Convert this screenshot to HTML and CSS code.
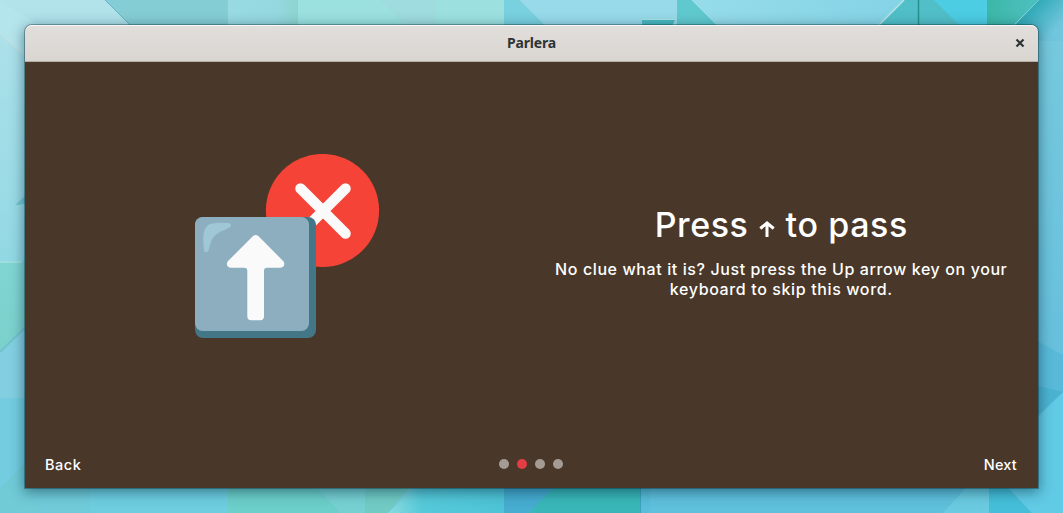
FILE: index.html
```html
<!DOCTYPE html>
<html lang="en">
<head>
<meta charset="utf-8">
<title>Parlera</title>
<link rel="stylesheet" href="styles.css">
</head>
<body>
<div class="desktop">
  <svg class="wallpaper" viewBox="0 0 1063 513" preserveAspectRatio="none" aria-hidden="true">
    <defs>
      <linearGradient id="left" x1="0" y1="0" x2="0" y2="1">
        <stop offset="0" stop-color="#b3e2ea"/><stop offset=".2" stop-color="#a3dee8"/><stop offset=".38" stop-color="#9adbe6"/><stop offset="1" stop-color="#70cddb"/>
      </linearGradient>
      <linearGradient id="green" x1="0" y1="0" x2="0" y2="1">
        <stop offset="0" stop-color="#80d5d2"/><stop offset="1" stop-color="#7bd0cc"/>
      </linearGradient>
      <linearGradient id="right" x1="0" y1="0" x2="0" y2="1">
        <stop offset="0" stop-color="#76c9dd"/><stop offset="1" stop-color="#5fbcdc"/>
      </linearGradient>
      <linearGradient id="pale" x1="0" y1="0" x2="1" y2="0">
        <stop offset="0" stop-color="#98dbe2"/><stop offset=".7" stop-color="#96d8e0"/><stop offset="1" stop-color="#8cd5cf"/>
      </linearGradient>
      <linearGradient id="sky" x1="0" y1="0" x2="1" y2="0">
        <stop offset="0" stop-color="#96dcea"/><stop offset="1" stop-color="#84d3e6"/>
      </linearGradient>
      <linearGradient id="teal" x1="0" y1="0" x2="1" y2="0">
        <stop offset="0" stop-color="#3cb7a8"/><stop offset="1" stop-color="#4ec1c0"/>
      </linearGradient>
      <linearGradient id="edge" gradientUnits="userSpaceOnUse" x1="1018" y1="18" x2="1044" y2="42">
        <stop offset="0" stop-color="#2ba7b5"/><stop offset="1" stop-color="#70c6dc"/>
      </linearGradient>
      <linearGradient id="foam" x1="0" y1="0" x2="1" y2="0">
        <stop offset="0" stop-color="#8adbe0"/><stop offset=".3" stop-color="#55c9d9"/><stop offset="1" stop-color="#4dc4d6"/>
      </linearGradient>
    </defs>
    <rect width="600" height="513" fill="url(#left)"/>
    <path d="M0 34 45 76V30L0 0Z" fill="#b5e5ec"/>
    <path d="M0 34 30 60" stroke="#bfe0e2" stroke-width="1.5"/>
    <path d="M105 0h123v40h-83Z" fill="#85cdd4"/>
    <path d="M105 0 145 40" stroke="#68b5cc"/>
    <rect x="228" width="70" height="40" fill="url(#pale)"/>
    <rect x="298" width="138" height="40" fill="#9be1e0"/>
    <path d="M380 0h56v40h-16Z" fill="#9fdcdf"/>
    <rect x="436" width="68" height="40" fill="#9ce1e0"/>
    <path d="M504 0h16l40 40h-56Z" fill="#79d0df"/>
    <path d="M520 0h157v40H560Z" fill="#98daea"/>
    <path d="M677 0h15l40 40h-55Z" fill="#60c9cf"/>
    <path d="M692 0h212l-40 40H732Z" fill="url(#sky)"/>
    <path d="M642 20h33l-5 10h-28Z" fill="#49b9c2"/>
    <path d="M642 19.5h34" stroke="#a8e5e8"/>
    <path d="M904 0h31l40 40H864Z" fill="#51bfc8"/>
    <path d="M904 0 864 40" stroke="#b9e4e4" stroke-width="1.5"/>
    <path d="M918.500 0v40" stroke="#258f91" stroke-width="1.5"/>
    <path d="M934 0h53v40h-13Z" fill="#4ccde3"/>
    <path d="M987 0h52l-40 40h-12Z" fill="url(#teal)"/>
    <rect x="1010" y="40" width="53" height="473" fill="url(#right)"/>
    <path d="M1039 0h24v41h-64Z" fill="url(#edge)"/>
    <path d="M15 205 40 182v18l-22 5Z" fill="#5fb9c9" opacity=".6"/>
    <path d="M0 261h40v49L0 353Z" fill="url(#green)"/>
    <path d="M0 262h22" stroke="#a9e0e4" stroke-width="1.5"/>
    <path d="M0 352 40 313v85H0Z" fill="#83cfe1"/>
    <path d="M0 352 40 313" stroke="#6fc3ca" stroke-width="2"/>
    <path d="M0 398h40v55L0 490Z" fill="#73cce0"/>
    <path d="M0 489 40 450v63H0Z" fill="#70cbd7"/>
    <path d="M0 489 40 450" stroke="#73c6cf"/>
    <rect x="40" y="470" width="50" height="43" fill="#70cbd9"/>
    <rect x="90" y="470" width="138" height="43" fill="#6dcee0"/>
    <path d="M228 470h137v43H228Z" fill="#6ccfc9"/>
    <path d="M645 480h418v33H645Z" fill="#5fc0dc"/>
    <path d="M310 480h55v33h-25Z" fill="#76d0d2"/>
    <path d="M365 470h60l-37 43h-23Z" fill="#71cbc4"/>
    <path d="M424 478h80v35H388Z" fill="url(#foam)"/>
    <path d="M504 480h60l-35 33h-25Z" fill="#46acd0"/>
    <path d="M561 480h79v33H529Z" fill="#39b7b8"/>
    <path d="M640 480h10v33h-10Z" fill="#5abdd9"/>
    <path d="M640.500 480v33" stroke="#38a4bd"/>
    <path d="M973 480h40l20 33h-90Z" fill="#6acbe0"/>
    <path d="M989 480h12l31 33h-43Z" fill="#45bfd9"/>
    <path d="M1035 340 1063 355v38l-28 27Z" fill="#59b9d9"/>
    <path d="M1035 385v33l28-26Z" fill="#4bb3d2"/>
    <path d="M1063 392v121h-31l-30-33 36-63Z" fill="#61cae5"/>
  </svg>
  <main class="window">
    <header class="titlebar">
      <span class="title">Parlera</span>
      <button class="close" aria-label="Close"><svg viewBox="0 0 10 10"><path d="M1.500 1.500l7 7M8.500 1.500l-7 7"/></svg></button>
    </header>
    <section class="page">
      <div class="picture">
        <svg class="art" viewBox="0 0 186 186" aria-hidden="true">
          <circle cx="127.500" cy="56.500" r="56.600" fill="#f54437"/>
          <path d="M105.500 34.500 150.500 79.500M150.500 34.500 105.500 79.500" stroke="#fafafa" stroke-width="10.500" stroke-linecap="round"/>
          <rect y="63" width="121" height="121" rx="8" fill="#437687"/>
          <rect y="63" width="114" height="114" rx="7.500" fill="#8caebf"/>
          <path d="M8.300 88C8 78 10 70.500 17 69.500c5.500-.9 13-1 17.500-.2 2 .5 2 3 .2 4.200-3.500 2.300-13 4-17.700 12-2.500 4.500-2.300 10-4.300 12-1.400 1.400-3.300.6-3.700-1.300Q8.400 92.500 8.300 88Z" fill="#a0c7d6"/>
          <path d="M57.800 82.300q2.900-2.700 5.800 0l24.300 24.500c2.900 3 1 7-3 7H72q-3 0-3 3v45.500c0 2.700-1.300 4-4 4h-8.700c-2.700 0-4-1.300-4-4V116.800q0-3-3-3H36c-4 0-5.500-4-2.700-7Z" fill="#fafafa"/>
        </svg>
      </div>
      <div class="copy">
        <h1 class="heading"><span>Press</span><svg class="up" viewBox="0 0 16 16" aria-label="↑"><path d="M8 16V2M1.300 7.500 8 2l6.700 5.500"/></svg><span>to pass</span></h1>
        <p class="body"><span class="line first">No clue what it is? Just press the Up arrow key on your</span> <span class="line second">keyboard to skip this word.</span></p>
      </div>
    </section>
    <footer class="nav">
      <button class="step back">Back</button>
      <div class="dots"><i class="dot"></i><i class="dot active"></i><i class="dot"></i><i class="dot"></i></div>
      <button class="step next">Next</button>
    </footer>
  </main>
</div>
</body>
</html>
```
FILE: styles.css
```css
* { box-sizing: border-box; }
body { margin: 0; overflow: hidden; font-family: Inter, "Liberation Sans", sans-serif; }
button { margin: 0; padding: 0; border: 0; background: none; font: inherit; color: inherit; }
.desktop { position: relative; width: 1063px; height: 513px; padding: 25px; overflow: hidden; }
.wallpaper { position: absolute; inset: 0; width: 1063px; height: 513px; }
.window {
  position: relative; display: flex; flex-direction: column;
  width: 1013px; height: 463px;
  background: #49382a; color: #fff;
  border-radius: 7px 7px 0 0;
  box-shadow: 0 0 0 1px rgba(0, 40, 50, .35), 0 3px 13px 1px rgba(0, 35, 55, .5);
}
.titlebar {
  display: grid; grid-template-columns: 1fr auto 1fr; align-items: center;
  height: 37px; flex: none;
  border-radius: 7px 7px 0 0;
  border-bottom: 1px solid #b5afa7;
  background: linear-gradient(#e1dedb, #d9d6d2);
  box-shadow: inset 0 1px #f9f8f8;
  color: #2e3436;
}
.title { grid-column: 2; font: bold 14px/20px "Noto Sans", sans-serif; letter-spacing: -.15px; }
.close { justify-self: end; width: 10px; height: 10px; margin-right: 13px; }
.close svg { display: block; width: 10px; height: 10px; }
.close path { stroke: #2e3436; stroke-width: 2.2; fill: none; }
.page { display: grid; grid-template-columns: 1fr 1fr; flex: 1; min-height: 0; }
.picture { padding: 92px 0 0 170px; }
.art { display: block; width: 186px; height: 186px; }
.copy { padding: 141px 7px 0 0; text-align: center; }
.heading {
  display: flex; justify-content: center; align-items: baseline;
  margin: 0; font-size: 34px; line-height: 44px; font-weight: 500; letter-spacing: .6px;
}
.up { width: 16px; height: 16px; margin: 0 11px 3px 10px; overflow: visible; }
.up path { fill: none; stroke: #fff; stroke-width: 3; }
.body { margin: 12px 0 0; font-size: 16px; line-height: 20px; font-weight: 500; }
.line { display: block; white-space: nowrap; }
.first { letter-spacing: .6px; }
.second { letter-spacing: .62px; }
.nav {
  display: grid; grid-template-columns: 1fr auto 1fr; align-items: center;
  height: 48px; padding: 0 21px 0 20px; flex: none;
}
.step { padding-top: 2px; font-size: 14.500px; line-height: 20px; font-weight: 500; letter-spacing: .5px; }
.next { letter-spacing: .2px; }
.back { justify-self: start; }
.next { justify-self: end; }
.dots { display: flex; gap: 8px; }
.dot { width: 10px; height: 10px; border-radius: 50%; background: #a49b95; }
.active { background: #e33e45; }
```
